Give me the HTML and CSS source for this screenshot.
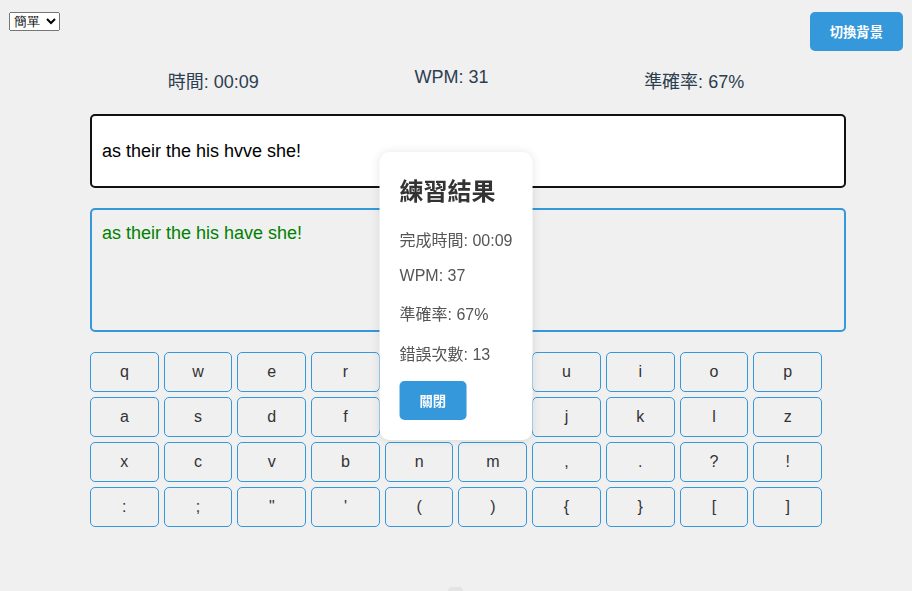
FILE: index.html
```html
<!DOCTYPE html>
<html lang="zh-Hant">
<head>
<meta charset="utf-8">
<title>打字練習</title>
<link rel="stylesheet" href="styles.css">
</head>
<body>
  <select class="level-select">
    <option>簡單</option>
    <option>中等</option>
    <option>困難</option>
  </select>
  <button class="btn bg-toggle">切換背景</button>

  <div class="container">
    <div class="stats">
      <div class="stat">時間: 00:09</div>
      <div class="stat">WPM: 31</div>
      <div class="stat">準確率: 67%</div>
    </div>

    <div class="target-text">as their the his hvve she!</div>

    <div class="input-area"><span class="ok">as their the his have she!</span></div>

    <div class="keyboard">
      <div class="key">q</div><div class="key">w</div><div class="key">e</div><div class="key">r</div><div class="key">t</div>
      <div class="key">y</div><div class="key">u</div><div class="key">i</div><div class="key">o</div><div class="key">p</div>
      <div class="key">a</div><div class="key">s</div><div class="key">d</div><div class="key">f</div><div class="key">g</div>
      <div class="key">h</div><div class="key">j</div><div class="key">k</div><div class="key">l</div><div class="key">z</div>
      <div class="key">x</div><div class="key">c</div><div class="key">v</div><div class="key">b</div><div class="key">n</div>
      <div class="key">m</div><div class="key">,</div><div class="key">.</div><div class="key">?</div><div class="key">!</div>
      <div class="key">:</div><div class="key">;</div><div class="key">"</div><div class="key">'</div><div class="key">(</div>
      <div class="key">)</div><div class="key">{</div><div class="key">}</div><div class="key">[</div><div class="key">]</div>
    </div>
  </div>

  <div class="modal">
    <h2 class="modal-title">練習結果</h2>
    <p class="modal-line">完成時間: 00:09</p>
    <p class="modal-line">WPM: 37</p>
    <p class="modal-line">準確率: 67%</p>
    <p class="modal-line">錯誤次數: 13</p>
    <button class="btn">關閉</button>
  </div>

  <div class="bottom-hint"></div>
</body>
</html>
```
FILE: styles.css
```css
html, body {
  margin: 0;
  padding: 0;
}

body {
  background: #f0f0f0;
  font-family: "Liberation Sans", "Noto Sans CJK TC", sans-serif;
  color: #333;
  min-height: 591px;
}

.level-select {
  position: absolute;
  top: 12px;
  left: 9px;
  width: 51px;
}

.btn {
  background: #3498db;
  color: #fff;
  border: none;
  border-radius: 5px;
  padding: 10px 20px;
  font-family: "Liberation Sans", "Noto Sans CJK TC", sans-serif;
  font-size: 13.333px;
  font-weight: bold;
  cursor: pointer;
}

.bg-toggle {
  position: absolute;
  top: 12px;
  right: 9px;
}

.container {
  width: 732px;
  margin: 0 auto;
  padding-top: 67px;
}

.stats {
  display: flex;
  justify-content: space-around;
  align-items: flex-start;
  font-size: 18px;
  color: #2c3e50;
  margin-bottom: 21px;
}

.target-text {
  display: flex;
  align-items: center;
  width: 100%;
  min-height: 50px;
  padding: 10px;
  background: #fff;
  border: 2px solid #111;
  border-radius: 5px;
  font-size: 18px;
  color: #000;
  margin-bottom: 20px;
}

.input-area {
  width: 100%;
  height: 97px;
  padding: 13px 10px 10px;
  border: 2px solid #3498db;
  border-radius: 5px;
  font-size: 18px;
  margin-bottom: 20px;
}

.ok {
  color: #008000;
}

.keyboard {
  display: grid;
  grid-template-columns: repeat(10, 1fr);
  grid-auto-rows: 40px;
  gap: 5px;
}

.key {
  display: flex;
  align-items: center;
  justify-content: center;
  border: 1px solid #3498db;
  border-radius: 5px;
  font-size: 16px;
  color: #333;
}

.modal {
  position: fixed;
  top: 50%;
  left: 50%;
  transform: translate(-50%, -50%);
  background: #fff;
  border-radius: 10px;
  padding: 20px;
  box-shadow: 0 0 10px rgba(0, 0, 0, 0.1);
}

.modal-title {
  margin: 0 0 20px;
  font-size: 24px;
  font-weight: bold;
  color: #333;
}

.modal-line {
  margin: 16px 0;
  font-size: 16px;
  color: #555;
  white-space: nowrap;
}

.bottom-hint {
  position: fixed;
  bottom: 0;
  left: 448px;
  width: 15px;
  height: 4px;
  border-radius: 4px 4px 0 0;
  background: #e4e4e6;
}
```
